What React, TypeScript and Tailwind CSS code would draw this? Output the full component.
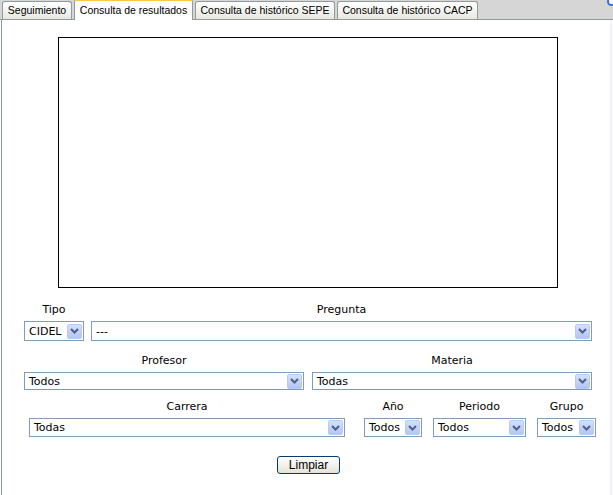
import React from "react";

const verdana = { fontFamily: '"DejaVu Sans", Verdana, sans-serif' };
const tahoma = { fontFamily: '"Liberation Sans", Tahoma, Arial, sans-serif' };

function Chevron() {
  return (
    <span className="mr-[1px] flex h-[15px] w-[15px] shrink-0 items-center justify-center rounded-[2px] border border-[#b9c9f1] bg-gradient-to-b from-[#d4e0fb] to-[#b3c6f4]">
      <svg width="9" height="6" viewBox="0 0 9 6">
        <path d="M1 1 L4.5 4.5 L8 1" fill="none" stroke="#4d6185" strokeWidth="2" />
      </svg>
    </span>
  );
}

function Select({ value, w, h = "h-[19px]" }: { value: string; w: string; h?: string }) {
  return (
    <div className={`${w} ${h} flex items-center border border-[#7f9db9] bg-white`}>
      <span className="flex-1 pl-[4px] text-[11px] leading-none text-black">{value}</span>
      <Chevron />
    </div>
  );
}

function Field({ label, w, children }: { label: string; w: string; children: React.ReactNode }) {
  return (
    <div className={`${w} flex flex-col items-center`}>
      <span className="h-[14px] text-[11px] leading-[14px] text-black">{label}</span>
      <div className="mt-[4px]">{children}</div>
    </div>
  );
}

export default function App() {
  const tabs = [
    { label: "Seguimiento", w: "w-[70px]" },
    { label: "Consulta de resultados", w: "w-[119px]", active: true },
    { label: "Consulta de histórico SEPE", w: "w-[140px]" },
    { label: "Consulta de histórico CACP", w: "w-[141px]" },
  ];

  return (
    <div className="flex h-[495px] w-[613px] flex-col bg-white" style={verdana}>
      {/* Tab strip */}
      <div className="relative flex h-[20px] items-end gap-[2px] border-b border-[#919b9c] bg-[#d6d6d6] pl-[2px]">
        {tabs.map((t) =>
          t.active ? (
            <div
              key={t.label}
              className={`${t.w} -mb-[1px] flex h-[21px] items-center justify-center rounded-t-[3px] border-x border-t-[2px] border-x-[#919b9c] border-t-[#ffc83c] bg-white text-[10.5px] text-black`}
              style={tahoma}
            >
              {t.label}
            </div>
          ) : (
            <div
              key={t.label}
              className={`${t.w} flex h-[18px] items-center justify-center rounded-t-[3px] border-x border-t border-[#919b9c] bg-gradient-to-b from-white to-[#e8e8e2] text-[10.5px] text-black`}
              style={tahoma}
            >
              {t.label}
            </div>
          )
        )}
        <span className="absolute right-[-3px] top-[-3px] h-[9px] w-[9px] rounded-full border-2 border-[#3a6ee0] bg-white" />
      </div>

      {/* Panel */}
      <div className="ml-[1px] mr-[1px] flex flex-1 flex-col border-l border-r-2 border-l-[#919b9c] border-r-[#f1f1fb]">
        <div className="ml-[56px] mt-[17px] h-[251px] w-[500px] border border-black bg-white" />

        <div className="ml-[22px] mt-[15px] flex gap-[7px]">
          <Field label="Tipo" w="w-[60px]">
            <Select value="CIDEL" w="w-[60px]" h="h-[20px]" />
          </Field>
          <Field label="Pregunta" w="w-[501px]">
            <Select value="---" w="w-[501px]" h="h-[20px]" />
          </Field>
        </div>

        <div className="ml-[22px] mt-[13px] flex gap-[8px]">
          <Field label="Profesor" w="w-[280px]">
            <Select value="Todos" w="w-[280px]" h="h-[18px]" />
          </Field>
          <Field label="Materia" w="w-[280px]">
            <Select value="Todas" w="w-[280px]" h="h-[18px]" />
          </Field>
        </div>

        <div className="ml-[27px] mt-[10px] flex">
          <Field label="Carrera" w="w-[316px]">
            <Select value="Todas" w="w-[316px]" />
          </Field>
          <div className="ml-[19px]">
            <Field label="Año" w="w-[58px]">
              <Select value="Todos" w="w-[58px]" />
            </Field>
          </div>
          <div className="ml-[11px]">
            <Field label="Periodo" w="w-[93px]">
              <Select value="Todos" w="w-[93px]" />
            </Field>
          </div>
          <div className="ml-[11px]">
            <Field label="Grupo" w="w-[59px]">
              <Select value="Todos" w="w-[59px]" />
            </Field>
          </div>
        </div>

        <button
          className="ml-[275px] mt-[19px] flex h-[18px] w-[63px] items-center justify-center rounded-[3px] border border-[#003c74] bg-gradient-to-b from-white to-[#e6e3d6] text-[12px] leading-none text-black"
          style={tahoma}
        >
          Limpiar
        </button>
      </div>
    </div>
  );
}
